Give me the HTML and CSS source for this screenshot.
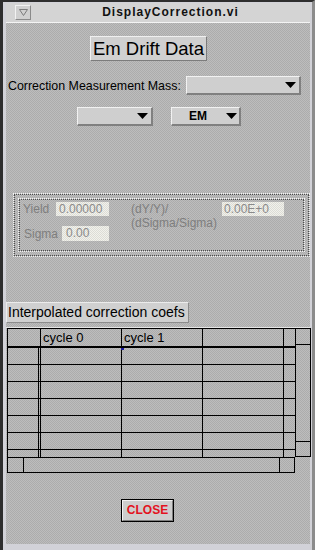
FILE: index.html
```html
<!DOCTYPE html>
<html lang="en">
<head>
    <meta charset="UTF-8">
    <title>DisplayCorrection.vi</title>
    <link rel="stylesheet" href="styles.css">
</head>
<body>
    <div class="window">
        <div class="titlebar">
            <div class="menu-btn">
                <svg width="9" height="7" viewBox="0 0 9 7"><polygon points="0.5,0.5 8.5,0.5 4.5,6.5" fill="none" stroke="#7c7c7c"/></svg>
            </div>
            <div class="title">DisplayCorrection.vi</div>
        </div>

        <div class="panel">
            <div class="big-btn">Em Drift Data</div>

            <div class="mass-row">
                <span class="label">Correction Measurement Mass:</span>
                <div class="ring ring-mass">
                    <svg width="11" height="6" viewBox="0 0 11 6"><polygon points="0,0 11,0 5.5,6" fill="#000"/></svg>
                </div>
            </div>

            <div class="ring-row">
                <div class="ring ring-blank">
                    <svg width="11" height="6" viewBox="0 0 11 6"><polygon points="0,0 11,0 5.5,6" fill="#000"/></svg>
                </div>
                <div class="ring ring-em">
                    <span class="ring-text">EM</span>
                    <svg width="11" height="6" viewBox="0 0 11 6"><polygon points="0,0 11,0 5.5,6" fill="#000"/></svg>
                </div>
            </div>

            <div class="group">
                <div class="group-gap">
                    <div class="group-inner">
                        <div class="group-body">
                            <div class="fit-col">
                                <div class="fit-row">
                                    <span class="dim-label yield-label">Yield</span>
                                    <span class="field field-yield">0.00000</span>
                                </div>
                                <div class="fit-row second">
                                    <span class="dim-label sigma-label">Sigma</span>
                                    <span class="field field-sigma">0.00</span>
                                </div>
                            </div>
                            <div class="ratio">(dY/Y)/<br>(dSigma/Sigma)</div>
                            <span class="field field-ratio">0.00E+0</span>
                        </div>
                    </div>
                </div>
            </div>

            <div class="caption">Interpolated correction coefs</div>
            <div class="sep"></div>

            <div class="table">
                <div class="table-main">
                    <div class="grid">
                        <div class="row head">
                            <div class="cell rh"></div>
                            <div class="cell col">cycle 0</div>
                            <div class="cell col">cycle 1</div>
                            <div class="cell col"></div>
                            <div class="cell narrow"></div>
                        </div>
                        <div class="row">
                            <div class="cell rh"></div><div class="cell col"></div><div class="cell col"><span class="mark"></span></div><div class="cell col"></div><div class="cell narrow"></div>
                        </div>
                        <div class="row">
                            <div class="cell rh"></div><div class="cell col"></div><div class="cell col"></div><div class="cell col"></div><div class="cell narrow"></div>
                        </div>
                        <div class="row">
                            <div class="cell rh"></div><div class="cell col"></div><div class="cell col"></div><div class="cell col"></div><div class="cell narrow"></div>
                        </div>
                        <div class="row">
                            <div class="cell rh"></div><div class="cell col"></div><div class="cell col"></div><div class="cell col"></div><div class="cell narrow"></div>
                        </div>
                        <div class="row">
                            <div class="cell rh"></div><div class="cell col"></div><div class="cell col"></div><div class="cell col"></div><div class="cell narrow"></div>
                        </div>
                        <div class="row">
                            <div class="cell rh"></div><div class="cell col"></div><div class="cell col"></div><div class="cell col"></div><div class="cell narrow"></div>
                        </div>
                        <div class="row partial">
                            <div class="cell rh"></div><div class="cell col"></div><div class="cell col"></div><div class="cell col"></div><div class="cell narrow"></div>
                        </div>
                    </div>
                    <div class="vscroll">
                        <div class="vbox"></div>
                        <div class="vtrack"></div>
                        <div class="vbox vbottom"></div>
                    </div>
                </div>
                <div class="hscroll">
                    <div class="hbox"></div>
                    <div class="htrack"></div>
                    <div class="hbox hright"></div>
                </div>
            </div>

            <div class="close-btn"><span>CLOSE</span></div>
        </div>
    </div>
</body>
</html>
```

FILE: styles.css
```css
* {
    margin: 0;
    padding: 0;
    box-sizing: border-box;
}

body {
    background: #b4b4b4;
    font-family: 'Liberation Sans', Arial, sans-serif;
    overflow: hidden;
}

.window {
    width: 315px;
    height: 550px;
    background: #d2d2d8;
    border-top: 2px solid #2e2e2e;
    border-left: 3px solid #2e2e2e;
    border-right: 3px solid #8c8c8c;
    padding: 1px 2px 6px 3px;
    display: flex;
    flex-direction: column;
}

.titlebar {
    height: 20px;
    background: #d4d4d4;
    border-bottom: 1px solid #f4f4f4;
    display: flex;
    align-items: center;
}

.menu-btn {
    width: 16px;
    height: 15px;
    margin-left: 9px;
    margin-top: -1px;
    background: #d0d0d0;
    border-top: 1px solid #f2f2f2;
    border-left: 1px solid #f2f2f2;
    border-right: 1px solid #8a8a8a;
    border-bottom: 1px solid #8a8a8a;
    display: flex;
    align-items: center;
    justify-content: center;
}

.title {
    flex: 1;
    text-align: center;
    font-size: 12px;
    font-weight: bold;
    letter-spacing: 1px;
    color: #111;
    margin-top: -1px;
}

.panel {
    flex: 1;
    background: repeating-conic-gradient(#acacac 0% 25%, #bdbdbd 0% 50%) 0 0 / 2px 2px;
    display: flex;
    flex-direction: column;
    align-items: flex-start;
}

.big-btn {
    margin: 13px 0 0 84px;
    width: 117px;
    height: 25px;
    background: #d0d0d0;
    border-top: 1px solid #f0f0f0;
    border-left: 1px solid #f0f0f0;
    border-right: 1px solid #7c7c7c;
    border-bottom: 1px solid #7c7c7c;
    font-size: 18.5px;
    line-height: 23px;
    text-align: center;
    color: #000;
}

.mass-row {
    margin-top: 15px;
    display: flex;
    align-items: center;
}

.label {
    width: 180px;
    padding-left: 2px;
    font-size: 12.4px;
    color: #000;
}

.ring {
    height: 19px;
    background: #cfcfcf;
    border-top: 1px solid #f2f2f2;
    border-left: 1px solid #f2f2f2;
    border-right: 2px solid #808080;
    border-bottom: 2px solid #808080;
    display: flex;
    align-items: center;
    justify-content: flex-end;
    padding-right: 3px;
}

.ring-mass {
    width: 115px;
}

.ring-row {
    margin: 12px 0 0 71px;
    display: flex;
    gap: 18px;
}

.ring-blank {
    width: 76px;
}

.ring-em {
    width: 70px;
    justify-content: space-between;
    padding-left: 17px;
    padding-right: 2px;
}

.ring-text {
    font-size: 12px;
    font-weight: bold;
    color: #000;
}

/* disabled cluster: stippled double frame */
.group {
    margin: 67px 0 0 7px;
    width: 297px;
    height: 64px;
    border: 1px dotted #f4f4f4;
}

.group-gap {
    height: 100%;
    border: 1px dotted #4c4c4c;
    padding: 3px;
}

.group-inner {
    height: 100%;
    border: 1px dotted #f4f4f4;
}

.group-body {
    height: 100%;
    border: 1px dotted #4c4c4c;
    display: flex;
    align-items: flex-start;
}

.fit-col {
    width: 111px;
    padding-top: 2px;
}

.fit-row {
    display: flex;
    align-items: center;
}

.fit-row.second {
    margin-top: 10px;
}

.dim-label,
.ratio {
    font-size: 12px;
    color: #7e7e7e;
}

.yield-label {
    width: 36px;
    padding-left: 3px;
}

.sigma-label {
    width: 42px;
    padding-left: 4px;
}

.field {
    display: block;
    height: 14px;
    background: repeating-conic-gradient(#f2f2ec 0% 25%, #dcdcd6 0% 50%) 0 0 / 2px 2px;
    font-size: 12px;
    line-height: 14px;
    color: #8a8a8a;
    padding-left: 3px;
}

.field-yield {
    width: 53px;
}

.field-sigma {
    width: 47px;
    height: 15px;
    line-height: 15px;
    padding-left: 4px;
}

.ratio {
    width: 91px;
    line-height: 14px;
    margin-top: 2px;
}

.field-ratio {
    width: 62px;
    margin-top: 2px;
    padding-left: 2px;
}

.caption {
    margin-top: 45px;
    width: 183px;
    height: 21px;
    background: #d0d0d0;
    border-top: 1px solid #ececec;
    border-left: 1px solid #ececec;
    border-right: 1px solid #8c8c8c;
    border-bottom: 1px solid #8c8c8c;
    font-size: 14px;
    line-height: 19px;
    padding-left: 1px;
    color: #000;
}

.sep {
    margin-top: 4px;
    width: 100%;
    height: 1px;
    background: #e6e6e6;
}

.table {
    margin-left: 1px;
}

.table-main {
    display: flex;
    border-top: 1px solid #000;
}

.grid {
    width: 289px;
    border-left: 1px solid #000;
}

.row {
    display: flex;
    height: 17px;
}

.row .cell {
    border-bottom: 1px solid #000;
}

.row.head {
    height: 19px;
}

.row.head .cell {
    border-bottom: 2px solid #000;
}

.row.partial {
    height: 7px;
}

.row.partial .cell {
    border-bottom: none;
}

.cell {
    height: 100%;
    border-right: 1px solid #000;
    font-size: 13px;
    line-height: 17px;
    padding-left: 2px;
    color: #000;
    position: relative;
}

.rh {
    width: 33px;
    border-right: 3px double #000;
}

.head .rh {
    border-right: 1px solid #000;
}

.col {
    width: 81px;
}

.narrow {
    width: 12px;
}

.mark {
    position: absolute;
    left: -1px;
    top: 0;
    width: 3px;
    height: 2px;
    background: #1a1aa0;
}

.vscroll {
    width: 15px;
    height: 128px;
    border-right: 1px solid #000;
    display: flex;
    flex-direction: column;
}

.vbox {
    height: 16px;
    border-bottom: 1px solid #000;
}

.vtrack {
    flex: 1;
}

.vbottom {
    border-top: 1px solid #000;
}

.hscroll {
    width: 288px;
    height: 16px;
    border: 1px solid #000;
    display: flex;
}

.hbox {
    width: 16px;
    border-right: 1px solid #000;
}

.htrack {
    flex: 1;
}

.hright {
    width: 15px;
    border-right: none;
    border-left: 1px solid #000;
}

.close-btn {
    margin: 26px 0 0 115px;
    width: 53px;
    height: 23px;
    border: 1px solid #000;
    display: flex;
}

.close-btn span {
    flex: 1;
    background: #cdcdcd;
    border-top: 1px solid #f2f2f2;
    border-left: 1px solid #f2f2f2;
    border-right: 1px solid #7e7e7e;
    border-bottom: 1px solid #7e7e7e;
    font-size: 12px;
    font-weight: bold;
    color: #e3121e;
    text-align: center;
    line-height: 19px;
}
```
